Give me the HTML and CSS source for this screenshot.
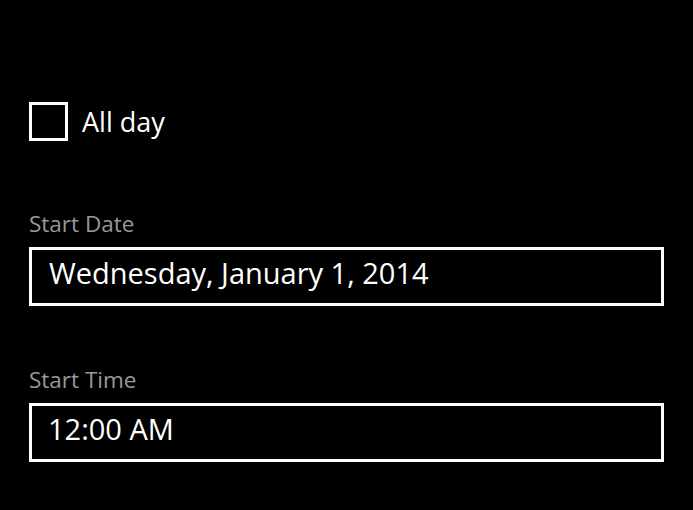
FILE: index.html
```html
<!DOCTYPE html>
<html lang="en">
<head>
    <meta charset="UTF-8">
    <title>New Appointment</title>
    <link rel="stylesheet" href="styles.css">
</head>
<body>
    <div class="page">
        <label class="check-row">
            <span class="check-box"></span>
            <span class="check-label">All day</span>
        </label>

        <div class="field date-field">
            <div class="field-label">Start Date</div>
            <div class="field-box">Wednesday, January 1, 2014</div>
        </div>

        <div class="field time-field">
            <div class="field-label">Start Time</div>
            <div class="field-box">12:00 AM</div>
        </div>
    </div>
</body>
</html>
```

FILE: styles.css
```css
html, body { margin: 0; background: #000; }
body { font-family: "Open Sans", "Noto Sans", sans-serif; color: #fff; }
.page { width: 635px; padding: 102px 0 0 29px; }
.check-row { display: flex; align-items: center; height: 39px; }
.check-box { width: 33px; height: 33px; border: 3px solid #fff; }
.check-label { margin-left: 14px; font-size: 27px; line-height: 39px; }
.field { margin-top: 69px; }
.time-field { margin-top: 60px; }
.field-label { font-size: 22.5px; line-height: 28px; color: #999; }
.field-box { box-sizing: border-box; margin-top: 9px; height: 59px; border: 3px solid #fff; padding: 3px 0 0 17px; font-size: 29px; line-height: 40px; }
.time-field .field-box { padding-left: 16px; }
```
